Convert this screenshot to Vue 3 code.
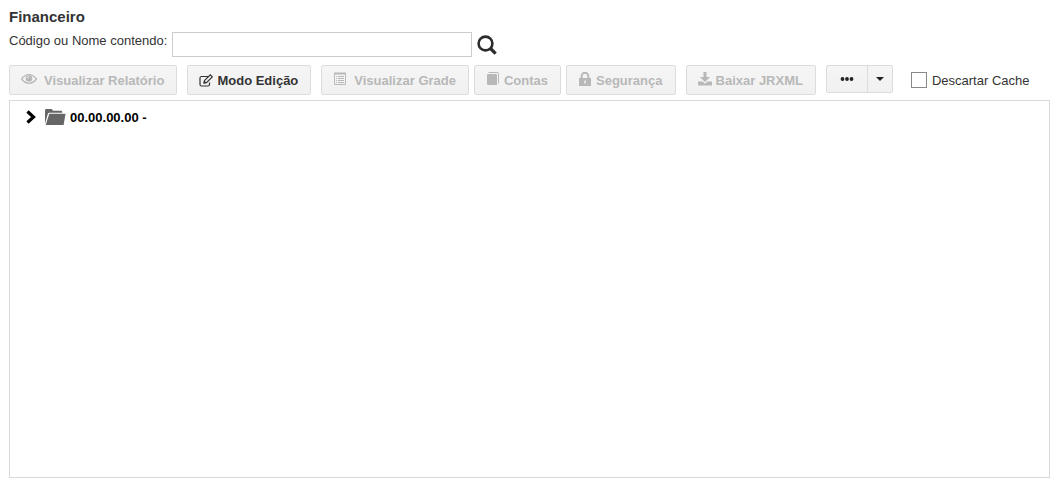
<script setup>
import { ref } from 'vue'

const query = ref('')
const discard = ref(false)
</script>

<template>
  <main class="page">
    <h1>Financeiro</h1>
    <form class="search" @submit.prevent>
      <label for="query">Código ou Nome contendo:</label>
      <input id="query" v-model="query" type="text" />
      <button class="find" type="submit" aria-label="Pesquisar">
        <svg width="20" height="20" viewBox="0 0 20 20" fill="none" stroke="#2b2b2b">
          <circle cx="8.500" cy="8.500" r="6.900" stroke-width="2.600" />
          <path d="M13 13l5.600 5.600" stroke-width="3.200" />
        </svg>
      </button>
    </form>

    <div class="toolbar">
      <button class="btn wide" type="button" disabled>
        <svg class="raised" width="16" height="14" viewBox="0 0 16 14">
          <path d="M.5 7Q4 2.700 8 2.700T15.500 7Q12 11.300 8 11.300T.5 7Z" fill="none" stroke="currentColor" stroke-width="1.200" />
          <circle cx="8" cy="6.500" r="3.300" fill="currentColor" />
          <path d="M6.300 6.200q.2-1.500 1.700-1.700" fill="none" stroke="#f3f3f3" />
        </svg>
        Visualizar Relatório
      </button>
      <button class="btn apart" type="button">
        <svg width="14" height="14" viewBox="0 0 14 14" fill="none" stroke="currentColor">
          <path d="M9 2.500H2.500Q1 2.500 1 4v6.500Q1 12 2.500 12H9q1.500 0 1.500-1.500V8.500" stroke-width="1.200" />
          <path d="M5 9l.5-2.500L11.300.9l2 2L7.500 8.600Z" stroke-width="1.200" />
          <path d="M5 9l.4-1.800 1.400 1.400Z" fill="currentColor" />
        </svg>
        Modo Edição
      </button>
      <button class="btn wide apart" type="button" disabled>
        <svg class="raised" width="14" height="14" viewBox="0 0 14 14" fill="none" stroke="currentColor">
          <path d="M1.500 1.500h11v11h-11Z" />
          <path d="M1 1.500h12" stroke-width="2" />
          <path d="M3 4.500h1M3 6.500h1M3 8.500h1M3 10.500h1M5 4.500h6M5 6.500h6M5 8.500h6M5 10.500h6" />
        </svg>
        Visualizar Grade
      </button>
      <button class="btn" type="button" disabled>
        <svg class="raised" width="14" height="14" viewBox="0 0 14 14">
          <path d="M2.500.5H11.500q1 0 1 1v10" fill="none" stroke="currentColor" />
          <path d="M1 3Q1 2 2 2h8q1 0 1 1V13H2q-1 0-1-1Z" fill="currentColor" />
        </svg>
        Contas
      </button>
      <button class="btn" type="button" disabled>
        <svg class="raised" width="14" height="14" viewBox="0 0 14 14">
          <path d="M3.700 7V4a3.300 3.300 0 0 1 6.600 0v3" fill="none" stroke="currentColor" stroke-width="2" />
          <path d="M1 6h12v8H1Z" fill="currentColor" />
          <path d="M6.300 8.500h1.500v3H6.300Z" fill="#f3f3f3" />
        </svg>
        Segurança
      </button>
      <button class="btn apart" type="button" disabled>
        <svg class="raised" width="14" height="14" viewBox="0 0 14 14" fill="currentColor">
          <path d="M5.500 0h3v5H12L7 10 2 5h3.500Z" />
          <path d="M0 9.500h4.500L7 11.800l2.500-2.300H14V13.500H0Z" />
        </svg>
        Baixar JRXML
      </button>
      <div class="split apart">
        <button type="button" aria-label="Mais opções">
          <svg width="14" height="6" viewBox="0 0 14 6" fill="#222">
            <circle cx="2.500" cy="3" r="1.900" /><circle cx="7" cy="3" r="1.900" /><circle cx="11.500" cy="3" r="1.900" />
          </svg>
        </button>
        <button class="menu" type="button" aria-label="Abrir menu">
          <svg width="8" height="4" viewBox="0 0 8 4"><path d="M0 0h8L4 4Z" fill="#222" /></svg>
        </button>
      </div>
      <label class="check"><input v-model="discard" type="checkbox" /><span>Descartar Cache</span></label>
    </div>

    <section class="tree">
      <div class="node">
        <button type="button" aria-label="Expandir">
          <svg width="10" height="14" viewBox="0 0 10 14"><path d="M1.500 1.500L7.500 7l-6 5.500" fill="none" stroke="#000" stroke-width="3.200" /></svg>
        </button>
        <svg class="folder" width="21" height="18" viewBox="0 0 22 18" fill="#666">
          <path d="M0 16V2Q0 .5 1.500.5H7L8.500 2.500H17q1 0 1 1V4.500H4.500Q3.500 4.500 3 5.500Z" />
          <path d="M4.500 5.500H21.500L19.500 17.500H.8Z" />
        </svg>
        <span>00.00.00.00 -</span>
      </div>
    </section>
  </main>
</template>

<style>
body {
  background: #fff;
}
</style>

<style scoped>
.page {
  box-sizing: border-box;
  min-height: 100vh;
  padding: 8px 7px 7px 9px;
  display: flex;
  flex-direction: column;
  font: 13px/18px "Liberation Sans", Arial, sans-serif;
  color: #333;
}
h1 {
  margin: 0;
  font-size: 15px;
  line-height: 18px;
}
button {
  font: inherit;
  color: inherit;
  cursor: pointer;
}
svg {
  display: block;
  flex: none;
}
.search {
  display: flex;
  align-items: flex-start;
  margin-top: 6px;
}
.search input {
  box-sizing: border-box;
  width: 300px;
  height: 25px;
  margin-left: 5px;
  padding: 2px 6px;
  border: 1px solid #ccc;
  font: inherit;
}
.find {
  margin: 3px 0 0 5px;
  padding: 0;
  border: 0;
  background: none;
}
.toolbar {
  display: flex;
  flex-wrap: wrap;
  align-items: flex-start;
  gap: 5px;
  margin-top: 8px;
}
.btn {
  box-sizing: border-box;
  display: flex;
  align-items: center;
  gap: 4px;
  height: 30px;
  padding: 2px 12px 0 11px;
  border: 1px solid #dcdcdc;
  border-radius: 2px;
  background: linear-gradient(#f5f5f5, #f1f1f1);
  font-weight: bold;
  white-space: nowrap;
}
.btn:disabled {
  color: #b8b8b8;
  cursor: default;
}
.wide {
  gap: 7px;
}
.apart {
  margin-left: 5px;
}
.raised {
  margin-bottom: 4px;
}
.split {
  display: flex;
  box-sizing: border-box;
  height: 28px;
  border: 1px solid #dcdcdc;
  border-radius: 2px;
  background: linear-gradient(#f5f5f5, #f1f1f1);
}
.split button {
  display: flex;
  align-items: center;
  justify-content: center;
  width: 40px;
  padding: 0;
  border: 0;
  background: none;
}
.split .menu {
  width: 25px;
  border-left: 1px solid #dcdcdc;
}
.check {
  display: flex;
  align-items: center;
  gap: 5px;
  height: 30px;
  margin-left: 13px;
}
.check span,
.node span {
  padding-top: 2px;
}
.check input {
  appearance: none;
  box-sizing: border-box;
  width: 16px;
  height: 16px;
  margin: 0;
  border: 1px solid #8a8a8a;
  background: #fff;
}
.check input:checked {
  background: #555;
}
.tree {
  flex: 1;
  margin-top: 5px;
  padding: 6px 16px;
  border: 1px solid #d9d9d9;
}
.node {
  display: flex;
  align-items: center;
  color: #000;
}
.node button {
  padding: 0;
  border: 0;
  background: none;
}
.folder {
  margin: 0 4px 0 9px;
}
.node span {
  font-weight: bold;
}
</style>
